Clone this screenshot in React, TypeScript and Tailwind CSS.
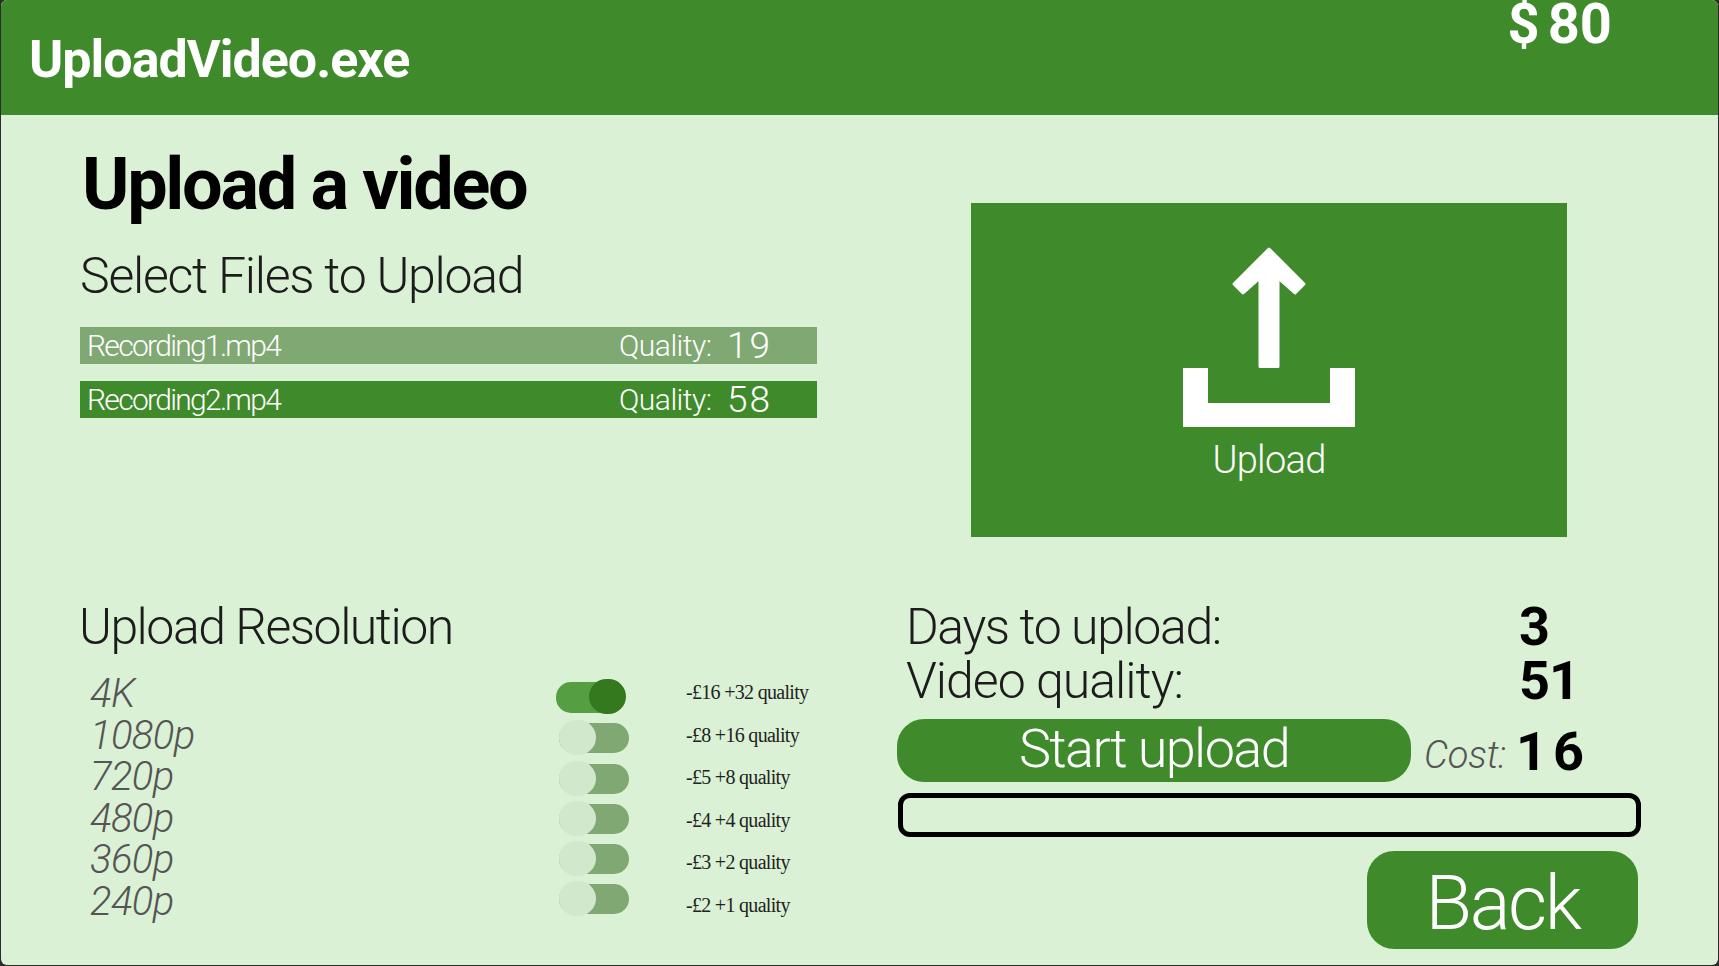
import React from 'react';

const FILES = [
  { name: 'Recording1.mp4', quality: '19', selected: false },
  { name: 'Recording2.mp4', quality: '58', selected: true },
];

const RESOLUTIONS = [
  { label: '4K', note: '-£16 +32 quality', on: true },
  { label: '1080p', note: '-£8 +16 quality', on: false },
  { label: '720p', note: '-£5 +8 quality', on: false },
  { label: '480p', note: '-£4 +4 quality', on: false },
  { label: '360p', note: '-£3 +2 quality', on: false },
  { label: '240p', note: '-£2 +1 quality', on: false },
];

function Toggle({ on }: { on: boolean }) {
  if (on) {
    return (
      <div className="relative ml-[-3px] h-[31px] w-[67px] rounded-[15px] bg-[#559e41]">
        <div className="absolute left-[33px] top-[-3px] h-[35px] w-[37px] rounded-full bg-[#35791f]" />
      </div>
    );
  }
  return (
    <div className="relative h-[30px] w-[70px] rounded-[15px] bg-[#7fa873]">
      <div className="absolute left-0 top-[-3px] h-[35px] w-[37px] rounded-full bg-[#d2e8cd]" />
    </div>
  );
}

function UploadIcon() {
  return (
    <svg width="172" height="180" viewBox="0 0 172 180" className="text-white">
      <path
        d="M86 2 L121 37 L112 46 L95 31 V119.5 H77 V31 L60 46 L51 37 Z"
        fill="currentColor"
        stroke="currentColor"
        strokeWidth="3"
        strokeLinejoin="round"
      />
      <path d="M0 121 H25 V156 H147 V121 H172 V180 H0 Z" fill="currentColor" />
    </svg>
  );
}

export default function App() {
  return (
    <div className="h-[966px] bg-[#2b2b2b]">
      <div className="ml-px flex h-[965px] w-[1717px] flex-col overflow-hidden rounded-[6px] bg-[#dbf1d5] font-['Roboto',sans-serif] text-black">
        <header className="flex h-[115px] shrink-0 justify-between bg-[#3f8b2b] text-white">
          <h1 className="self-center pl-[28px] pt-[4px] text-[52px] font-bold leading-none tracking-[-1px]">UploadVideo.exe</h1>
          <div className="pr-[106px] text-[56px] font-bold leading-[48px]">
            <span className="mr-[8px]">$</span>80
          </div>
        </header>

        <div className="flex h-[475px] shrink-0">
          <section className="w-[970px] shrink-0 pl-[79px]">
            <h2 className="ml-[2px] mt-[32px] text-[72px] font-bold leading-[76px] tracking-[-2.3px]">Upload a video</h2>
            <p className="mt-[25px] text-[50px] font-light leading-[56px] tracking-[-1.25px] text-[#1c1c1c]">Select Files to Upload</p>
            <ul className="mt-[23px] flex w-[737px] flex-col gap-[17px]">
              {FILES.map((file) => (
                <li
                  key={file.name}
                  className={`flex h-[37px] items-center pl-[7px] text-white ${file.selected ? 'bg-[#3f8b2b]' : 'bg-[#7fa873]'}`}
                >
                  <span className="w-[532px] text-[30px] font-light leading-none tracking-[-1.7px]">{file.name}</span>
                  <span className="w-[108px] text-[30px] font-light leading-none tracking-[-0.5px]">Quality:</span>
                  <span className="text-[37px] font-light leading-none tracking-[2px]">{file.quality}</span>
                </li>
              ))}
            </ul>
          </section>
          <button className="mt-[88px] flex h-[334px] w-[596px] flex-col items-center bg-[#3f8b2b] pt-[44px] text-white">
            <UploadIcon />
            <span className="mt-[11px] text-[38px] font-light leading-[44px] tracking-[-0.7px]">Upload</span>
          </button>
        </div>

        <div className="flex flex-1">
          <section className="w-[896px] shrink-0 pl-[78px]">
            <h3 className="mt-[9px] text-[50px] font-light leading-[56px] tracking-[-1.5px] text-[#1c1c1c]">Upload Resolution</h3>
            <div className="mt-[19px] flex">
              <div className="flex w-[480px] flex-col gap-[1.5px] pl-[11px]">
                {RESOLUTIONS.map((r) => (
                  <div key={r.label} className="text-[40px] font-light italic leading-[40px] tracking-[-0.6px] text-[#555]">
                    {r.label}
                  </div>
                ))}
              </div>
              <div className="mt-[8px] flex w-[127px] flex-col gap-[10.3px]">
                {RESOLUTIONS.map((r) => (
                  <Toggle key={r.label} on={r.on} />
                ))}
              </div>
              <div className="mt-[6px] flex flex-col gap-[18.6px] font-['Liberation_Serif',serif] text-[20px] leading-[24px] tracking-[-0.7px] text-[#222]">
                {RESOLUTIONS.map((r) => (
                  <div key={r.label}>{r.note}</div>
                ))}
              </div>
            </div>
          </section>

          <section className="flex-1">
            <div className="ml-[9px] mt-[10px] flex items-center text-[50px] leading-[54px]">
              <span className="w-[613px] font-light tracking-[-1.4px] text-[#1c1c1c]">Days to upload:</span>
              <span className="text-[54px] font-bold">3</span>
            </div>
            <div className="ml-[9px] flex items-center text-[50px] leading-[54px]">
              <span className="w-[613px] font-light tracking-[-1px] text-[#1c1c1c]">Video quality:</span>
              <span className="text-[54px] font-bold tracking-[-1px]">51</span>
            </div>
            <div className="mt-[11px] flex h-[63px] items-center">
              <button className="h-[63px] w-[514px] rounded-[27px] bg-[#3f8b2b] pb-[3px] text-[54px] font-light leading-none tracking-[-1.6px] text-white">
                Start upload
              </button>
              <span className="ml-[13px] mt-[8px] w-[92px] text-[38px] font-light italic leading-none tracking-[-0.2px] text-[#555]">Cost:</span>
              <span className="mt-[3px] text-[54px] font-bold leading-none tracking-[6px]">16</span>
            </div>
            <div className="ml-[1px] mt-[11px] h-[44px] w-[743px] rounded-[12px] border-[5px] border-black" />
            <div className="flex w-[741px] justify-end">
              <button className="mt-[14px] h-[98px] w-[271px] rounded-[27px] bg-[#3f8b2b] pt-[6px] text-[76px] font-light leading-none tracking-[-2.5px] text-white">
                Back
              </button>
            </div>
          </section>
        </div>
      </div>
    </div>
  );
}
